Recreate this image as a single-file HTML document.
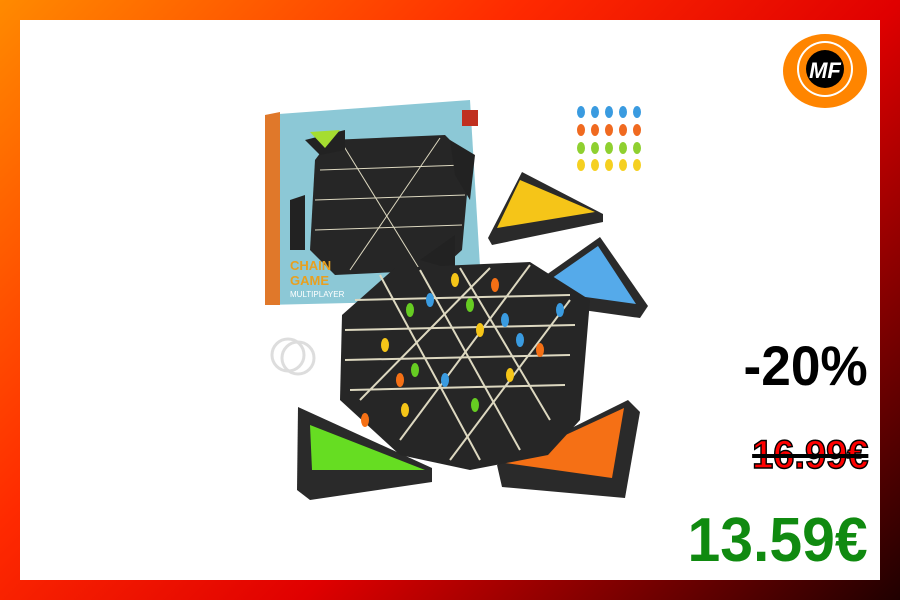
<!DOCTYPE html>
<html><head><style>
html,body{margin:0;padding:0}
body{width:900px;height:600px;overflow:hidden;background:linear-gradient(135deg,#ff8a00 0%,#ff2a00 35%,#e00000 60%,#200000 100%);position:relative;font-family:"Liberation Sans",sans-serif}
.in{position:absolute;left:20px;top:20px;width:860px;height:560px;background:#fff}
.t{position:absolute;right:32px;font-weight:bold;text-align:right;transform:scaleX(0.95);transform-origin:right}
</style></head><body>
<div class="in"></div>
<svg style="position:absolute;left:0;top:0" width="900" height="600">
<!-- logo -->
<ellipse cx="825" cy="71" rx="42" ry="37" fill="#ff8500"/>
<circle cx="825" cy="69" r="28" fill="#fff"/>
<circle cx="825" cy="69" r="26" fill="#ff8500"/>
<circle cx="825" cy="69" r="19" fill="#000"/>
<text x="825" y="78" font-family="Liberation Sans" font-weight="bold" font-style="italic" font-size="22" fill="#fff" text-anchor="middle">MF</text>
<!-- box -->
<polygon points="265,115 470,100 482,300 265,305" fill="#8cc8d6"/>
<polygon points="265,115 280,112 280,305 265,305" fill="#e0782a"/>
<polygon points="330,140 445,135 470,160 462,250 440,270 335,275 310,250 315,160" fill="#262626"/>
<g stroke="#ddd8c0" stroke-width="1"><line x1="320" y1="170" x2="465" y2="165"/><line x1="315" y1="200" x2="465" y2="195"/><line x1="315" y1="230" x2="462" y2="225"/><line x1="340" y1="140" x2="420" y2="270"/><line x1="440" y1="138" x2="350" y2="270"/></g>
<polygon points="305,140 345,130 345,150 320,155" fill="#222"/><polygon points="310,132 340,130 325,148" fill="#a5dd30"/>
<polygon points="450,140 475,155 470,200 455,175" fill="#222"/>
<polygon points="290,200 305,195 305,250 290,250" fill="#222"/>
<polygon points="420,260 455,235 455,270" fill="#222"/>
<rect x="462" y="110" width="16" height="16" fill="#c03020"/>
<text x="290" y="270" font-size="13" font-weight="bold" fill="#e8a020">CHAIN</text>
<text x="290" y="285" font-size="13" font-weight="bold" fill="#e8a020">GAME</text>
<text x="290" y="297" font-size="8" fill="#fff">MULTIPLAYER</text>
<!-- pegs top right -->
<g fill="#3a9be0"><ellipse cx="581" cy="112" rx="4" ry="6"/><ellipse cx="595" cy="112" rx="4" ry="6"/><ellipse cx="609" cy="112" rx="4" ry="6"/><ellipse cx="623" cy="112" rx="4" ry="6"/><ellipse cx="637" cy="112" rx="4" ry="6"/></g>
<g fill="#f06a20"><ellipse cx="581" cy="130" rx="4" ry="6"/><ellipse cx="595" cy="130" rx="4" ry="6"/><ellipse cx="609" cy="130" rx="4" ry="6"/><ellipse cx="623" cy="130" rx="4" ry="6"/><ellipse cx="637" cy="130" rx="4" ry="6"/></g>
<g fill="#8fd030"><ellipse cx="581" cy="148" rx="4" ry="6"/><ellipse cx="595" cy="148" rx="4" ry="6"/><ellipse cx="609" cy="148" rx="4" ry="6"/><ellipse cx="623" cy="148" rx="4" ry="6"/><ellipse cx="637" cy="148" rx="4" ry="6"/></g>
<g fill="#f5d020"><ellipse cx="581" cy="165" rx="4" ry="6"/><ellipse cx="595" cy="165" rx="4" ry="6"/><ellipse cx="609" cy="165" rx="4" ry="6"/><ellipse cx="623" cy="165" rx="4" ry="6"/><ellipse cx="637" cy="165" rx="4" ry="6"/></g>
<!-- triangles -->
<polygon points="522,172 488,238 492,245 603,222 603,214" fill="#2a2a2a"/><polygon points="520,180 497,228 595,212" fill="#f5c518"/>
<polygon points="600,237 522,292 526,302 640,318 648,306" fill="#2a2a2a"/><polygon points="598,246 535,290 636,304" fill="#55aaea"/>
<polygon points="298,407 297,490 310,500 432,482 432,468" fill="#2a2a2a"/><polygon points="310,425 312,470 425,470" fill="#66dd22"/>
<polygon points="628,400 640,412 625,498 502,487 497,465" fill="#2a2a2a"/><polygon points="624,408 612,478 505,463" fill="#f57015"/>
<!-- main board -->
<polygon points="395,268 530,262 590,300 580,420 548,455 470,470 400,455 340,400 342,315" fill="#262626"/>
<g stroke="#ddd8c0" stroke-width="2">
<line x1="355" y1="300" x2="570" y2="295"/><line x1="345" y1="330" x2="575" y2="325"/><line x1="345" y1="360" x2="570" y2="355"/><line x1="350" y1="390" x2="565" y2="385"/>
<line x1="380" y1="275" x2="480" y2="460"/><line x1="420" y1="270" x2="520" y2="450"/><line x1="460" y1="268" x2="550" y2="420"/>
<line x1="530" y1="265" x2="400" y2="440"/><line x1="490" y1="268" x2="360" y2="400"/><line x1="570" y1="300" x2="450" y2="460"/>
</g>
<g fill="#f5c518"><ellipse cx="455" cy="280" rx="4" ry="7"/><ellipse cx="385" cy="345" rx="4" ry="7"/><ellipse cx="480" cy="330" rx="4" ry="7"/><ellipse cx="510" cy="375" rx="4" ry="7"/><ellipse cx="405" cy="410" rx="4" ry="7"/></g>
<g fill="#3a9be0"><ellipse cx="430" cy="300" rx="4" ry="7"/><ellipse cx="505" cy="320" rx="4" ry="7"/><ellipse cx="445" cy="380" rx="4" ry="7"/><ellipse cx="560" cy="310" rx="4" ry="7"/><ellipse cx="520" cy="340" rx="4" ry="7"/></g>
<g fill="#66cc22"><ellipse cx="410" cy="310" rx="4" ry="7"/><ellipse cx="470" cy="305" rx="4" ry="7"/><ellipse cx="415" cy="370" rx="4" ry="7"/><ellipse cx="475" cy="405" rx="4" ry="7"/></g>
<g fill="#f57015"><ellipse cx="400" cy="380" rx="4" ry="7"/><ellipse cx="495" cy="285" rx="4" ry="7"/><ellipse cx="540" cy="350" rx="4" ry="7"/><ellipse cx="365" cy="420" rx="4" ry="7"/></g>
<!-- rings -->
<g fill="none" stroke="#ddd" stroke-width="3"><circle cx="288" cy="355" r="16"/><circle cx="298" cy="358" r="16"/></g>
</svg>
<div class="t" style="top:333px;font-size:56px;color:#000">-20%</div>
<div class="t" style="top:433px;font-size:40px;color:#f00;-webkit-text-stroke:1.5px #000;text-decoration:line-through;text-decoration-color:#000">16.99€</div>
<div class="t" style="top:505px;font-size:62px;color:#108a10">13.59€</div>
</body></html>
